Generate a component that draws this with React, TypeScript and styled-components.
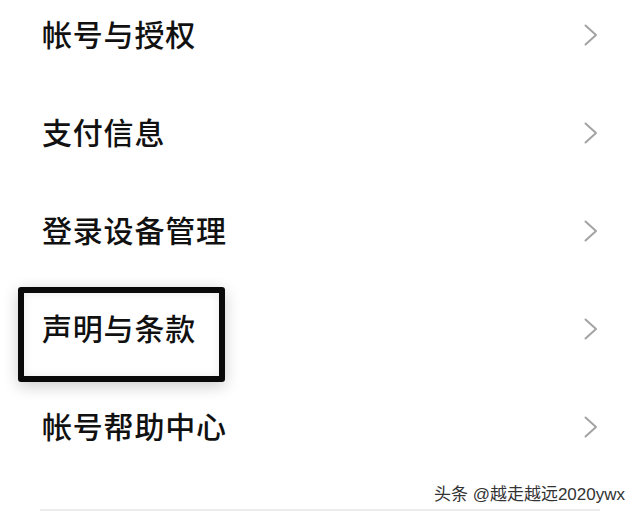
import styled, { createGlobalStyle } from 'styled-components';

const GlobalStyle = createGlobalStyle`
    html, body {
        margin: 0;
        padding: 0;
        background: #ffffff;
    }
    body {
        font-family: "Noto Sans CJK SC", "Noto Sans", sans-serif;
    }
`;

const Page = styled.div`
    position: relative;
    width: 640px;
    height: 514px;
    overflow: hidden;
    background: #ffffff;
`;

const MenuList = styled.ul`
    list-style: none;
    margin: -14px 0 0;
    padding: 0;
    display: flex;
    flex-direction: column;
`;

const MenuRow = styled.li`
    position: relative;
    height: 98px;
    display: flex;
    align-items: center;
    justify-content: space-between;
    padding: 0 42px 0 42px;
`;

// CJK glyphs sit a little low in the line box, lift them a touch
const MenuTitle = styled.span`
    font-size: 30px;
    font-weight: 500;
    letter-spacing: 0.8px;
    color: #111111;
    line-height: 1;
    padding-bottom: 5px;
`;

const Highlight = styled.div`
    position: absolute;
    left: 18px;
    top: 7px;
    width: 207px;
    height: 95px;
    box-sizing: border-box;
    border: 6px solid #0a0a0a;
    border-radius: 3px;
    box-shadow: 0 4px 16px rgba(0, 0, 0, 0.2), inset 0 0 10px rgba(0, 0, 0, 0.08);
    pointer-events: none;
`;

const Divider = styled.div`
    position: absolute;
    left: 40px;
    right: 40px;
    top: 509px;
    height: 2px;
    background: #ececec;
`;

const Watermark = styled.div`
    position: absolute;
    right: 15px;
    top: 480px;
    font-family: "Liberation Sans", "Noto Sans CJK SC", sans-serif;
    font-size: 17px;
    color: #333333;
    text-shadow: 0 0 2px #ffffff, 0 0 2px #ffffff;
    white-space: nowrap;
`;

const Chevron = () => (
    <svg width="14" height="22" viewBox="0 0 14 22" fill="none">
        <path d="M1.5 1.5 L12 11 L1.5 20.5" stroke="#a3a3a3" strokeWidth="2" strokeLinecap="round" strokeLinejoin="round" />
    </svg>
);

const items = [
    { text: '帐号与授权', marked: false },
    { text: '支付信息', marked: false },
    { text: '登录设备管理', marked: false },
    { text: '声明与条款', marked: true },
    { text: '帐号帮助中心', marked: false },
];

export default function App() {
    return (
        <Page>
            <GlobalStyle />
            <MenuList>
                {items.map(item => (
                    <MenuRow key={item.text}>
                        <MenuTitle>{item.text}</MenuTitle>
                        <Chevron />
                        {item.marked && <Highlight />}
                    </MenuRow>
                ))}
            </MenuList>
            <Divider />
            <Watermark>头条 @越走越远2020ywx</Watermark>
        </Page>
    );
}
